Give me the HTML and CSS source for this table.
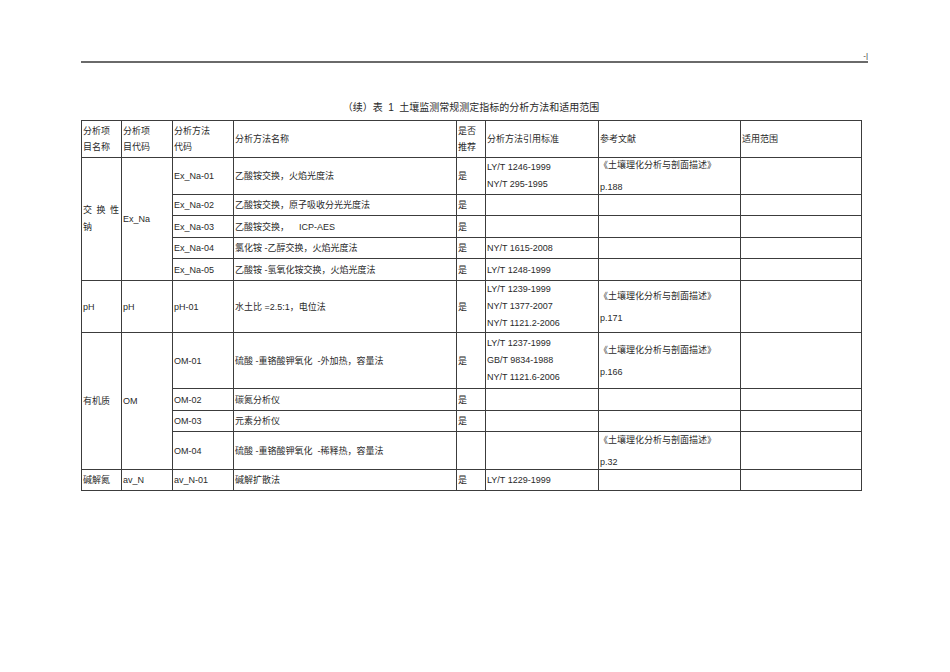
FILE: index.html
```html
<!DOCTYPE html>
<html lang="zh">
<head>
<meta charset="utf-8">
<title>表 1 土壤监测常规测定指标的分析方法和适用范围</title>
<link rel="stylesheet" href="styles.css">
</head>
<body>
<div class="page">
  <div class="runhead"><span class="mark">-|</span></div>
  <div class="caption">（续）表&nbsp;&nbsp;1&nbsp;&nbsp;土壤监测常规测定指标的分析方法和适用范围</div>
  <table class="grid">
    <colgroup>
      <col class="c1"><col class="c2"><col class="c3"><col class="c4"><col class="c5"><col class="c6"><col class="c7"><col class="c8">
    </colgroup>
    <tr class="h-head">
      <td class="two">分析项<br>目名称</td>
      <td class="two">分析项<br>目代码</td>
      <td class="two">分析方法<br>代码</td>
      <td>分析方法名称</td>
      <td class="two">是否<br>推荐</td>
      <td>分析方法引用标准</td>
      <td>参考文献</td>
      <td>适用范围</td>
    </tr>
    <tr class="h37">
      <td rowspan="5"><div class="spread"><span>交</span><span>换</span><span>性</span></div><div class="ln">钠</div></td>
      <td rowspan="5">Ex_Na</td>
      <td>Ex_Na-01</td>
      <td>乙酸铵交换，火焰光度法</td>
      <td>是</td>
      <td class="std">LY/T 1246-1999<br>NY/T 295-1995</td>
      <td class="ref"><div>《土壤理化分析与剖面描述》</div><div class="pg">p.188</div></td>
      <td></td>
    </tr>
    <tr class="h21">
      <td>Ex_Na-02</td>
      <td>乙酸铵交换，原子吸收分光光度法</td>
      <td>是</td>
      <td></td><td></td><td></td>
    </tr>
    <tr class="h22">
      <td>Ex_Na-03</td>
      <td>乙酸铵交换，&nbsp;&nbsp;&nbsp;&nbsp;ICP-AES</td>
      <td>是</td>
      <td></td><td></td><td></td>
    </tr>
    <tr class="h21">
      <td>Ex_Na-04</td>
      <td>氯化铵 -乙醇交换，火焰光度法</td>
      <td>是</td>
      <td>NY/T 1615-2008</td><td></td><td></td>
    </tr>
    <tr class="h22">
      <td>Ex_Na-05</td>
      <td>乙酸铵 -氢氧化铵交换，火焰光度法</td>
      <td>是</td>
      <td>LY/T 1248-1999</td><td></td><td></td>
    </tr>
    <tr class="h52">
      <td>pH</td>
      <td>pH</td>
      <td>pH-01</td>
      <td>水土比 =2.5:1，电位法</td>
      <td>是</td>
      <td class="std">LY/T 1239-1999<br>NY/T 1377-2007<br>NY/T 1121.2-2006</td>
      <td class="ref"><div>《土壤理化分析与剖面描述》</div><div class="pg">p.171</div></td>
      <td></td>
    </tr>
    <tr class="h56">
      <td rowspan="4">有机质</td>
      <td rowspan="4">OM</td>
      <td>OM-01</td>
      <td>硫酸 -重铬酸钾氧化&nbsp;&nbsp;-外加热，容量法</td>
      <td>是</td>
      <td class="std">LY/T 1237-1999<br>GB/T 9834-1988<br>NY/T 1121.6-2006</td>
      <td class="ref"><div>《土壤理化分析与剖面描述》</div><div class="pg">p.166</div></td>
      <td></td>
    </tr>
    <tr class="h22">
      <td>OM-02</td>
      <td>碳氮分析仪</td>
      <td>是</td>
      <td></td><td></td><td></td>
    </tr>
    <tr class="h21">
      <td>OM-03</td>
      <td>元素分析仪</td>
      <td>是</td>
      <td></td><td></td><td></td>
    </tr>
    <tr class="h38">
      <td>OM-04</td>
      <td>硫酸 -重铬酸钾氧化&nbsp;&nbsp;-稀释热，容量法</td>
      <td></td>
      <td></td>
      <td class="ref"><div>《土壤理化分析与剖面描述》</div><div class="pg">p.32</div></td>
      <td></td>
    </tr>
    <tr class="h21">
      <td>碱解氮</td>
      <td>av_N</td>
      <td>av_N-01</td>
      <td>碱解扩散法</td>
      <td>是</td>
      <td>LY/T 1229-1999</td>
      <td></td>
      <td></td>
    </tr>
  </table>
</div>
</body>
</html>
```

FILE: styles.css
```css
html, body {
  margin: 0;
  padding: 0;
  background: #ffffff;
}

body {
  font-family: "Liberation Sans", "Noto Sans CJK SC", sans-serif;
  font-size: 9px;
  color: #2a2a2a;
}

.page {
  width: 950px;
  padding-top: 47px;
}

.runhead {
  margin-left: 81px;
  width: 787px;
  height: 14px;
  border-bottom: 2px solid #6a6a6a;
  display: flex;
  justify-content: flex-end;
  align-items: flex-end;
}

.mark {
  font-size: 8px;
  line-height: 10px;
  color: #333;
  margin-right: 0;
}

.caption {
  margin-left: 81px;
  width: 780px;
  margin-top: 39px;
  text-align: center;
  font-size: 10px;
  line-height: 12px;
  height: 13px;
  color: #2a2a2a;
}

.grid {
  margin-left: 81px;
  margin-top: 5px;
  border-collapse: collapse;
  table-layout: fixed;
  width: 781px;
}

.grid td {
  border: 1px solid #3c3c3c;
  padding: 0 0 0 1px;
  vertical-align: middle;
  line-height: 16px;
  white-space: nowrap;
  overflow: hidden;
}

.c1 { width: 40px; }
.c2 { width: 51px; }
.c3 { width: 61px; }
.c4 { width: 223px; }
.c5 { width: 29px; }
.c6 { width: 113px; }
.c7 { width: 142px; }
.c8 { width: 121px; }

.h-head { height: 37px; }
.h37 { height: 37px; }
.h21 { height: 21px; }
.h22 { height: 22px; }
.h52 { height: 52px; }
.h56 { height: 56px; }
.h38 { height: 38px; }

.grid td.two { line-height: 16px; }

.spread {
  display: flex;
  justify-content: space-between;
  padding-right: 2px;
  line-height: 17px;
}

.ln { line-height: 17px; }

.grid td.std { line-height: 17px; }

.grid td.ref { line-height: 12px; }
.ref div:first-child { text-indent: -1px; }
.ref .pg { margin-top: 10px; }
```
